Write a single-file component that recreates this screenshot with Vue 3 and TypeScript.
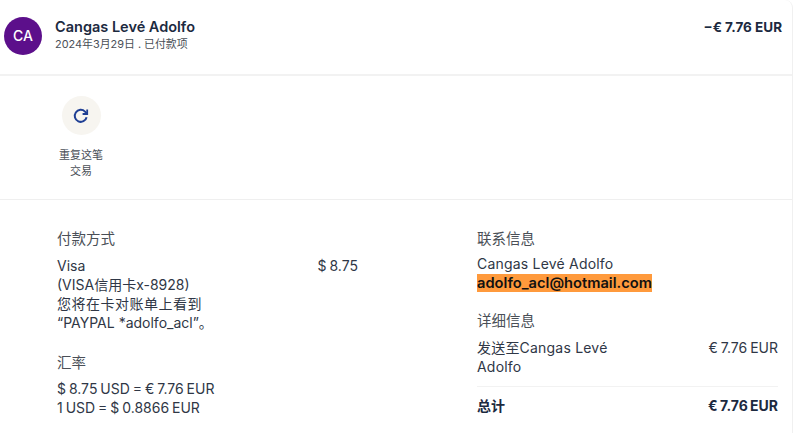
<script setup lang="ts">
const paymentLines = ['Visa', '(VISA信用卡x-8928)', '您将在卡对账单上看到', '“PAYPAL *adolfo_acl”。']
const rates = ['$ 8.75 USD = € 7.76 EUR', '1 USD = $ 0.8866 EUR']
</script>

<template>
  <div class="card">
    <header class="head">
      <div class="avatar">CA</div>
      <div class="who">
        <div class="name">Cangas Levé Adolfo</div>
        <div class="date">2024年3月29日 . 已付款项</div>
      </div>
      <div class="amount">−€ 7.76 EUR</div>
    </header>

    <section class="actions">
      <div class="action">
        <div class="action-icon">
          <svg width="18" height="18" viewBox="0 0 18 18" fill="none" stroke="#1f3f94" stroke-width="2">
            <path d="M14.6 10.2A6 6 0 1 1 13 4.6L15 6.6" />
            <path d="M15.2 2.4V7H10.6" stroke-width="1.8" />
          </svg>
        </div>
        <div class="action-label">重复这笔<br />交易</div>
      </div>
    </section>

    <section class="details">
      <div class="col-left">
        <h3 class="title">付款方式</h3>
        <div class="pay-row">
          <div class="pay-lines">
            <div v-for="line in paymentLines" :key="line">{{ line }}</div>
          </div>
          <div class="money">$ 8.75</div>
        </div>
        <h3 class="title rate-title">汇率</h3>
        <div v-for="rate in rates" :key="rate" class="money">{{ rate }}</div>
      </div>

      <div class="col-right">
        <h3 class="title contact-title">联系信息</h3>
        <div class="contact">Cangas Levé Adolfo</div>
        <div><mark class="email">adolfo_acl@hotmail.com</mark></div>
        <h3 class="title info-title">详细信息</h3>
        <div class="line-row">
          <div class="send-to">发送至Cangas Levé Adolfo</div>
          <div class="money">€ 7.76 EUR</div>
        </div>
        <div class="total-row">
          <div>总计</div>
          <div class="money">€ 7.76 EUR</div>
        </div>
      </div>
    </section>
  </div>
</template>

<style>
html,
body {
  margin: 0;
  background: #fff;
}
</style>

<style scoped>
.card {
  width: 793px;
  height: 433px;
  box-sizing: border-box;
  border-right: 1px solid #f0f0f0;
  border-top-right-radius: 8px;
  overflow: hidden;
  font-family: Inter, "Noto Sans CJK SC", sans-serif;
  font-size: 14px;
  line-height: 19px;
  color: #2f3746;
}

.head {
  display: flex;
  height: 76px;
  box-sizing: border-box;
  padding: 17px 10px 0 4px;
  border-bottom: 2px solid #f2f2f2;
}

.avatar {
  width: 38px;
  height: 38px;
  border-radius: 50%;
  background: #5c0f8b;
  color: #fff;
  font-size: 14px;
  font-weight: 500;
  line-height: 38px;
  text-align: center;
}

.who {
  flex: 1;
  margin-left: 13px;
}

.name {
  font-size: 14.5px;
  font-weight: 600;
  line-height: 20px;
  color: #1c2a3f;
}

.date {
  font-size: 10.9px;
  line-height: 15px;
  color: #4a4f57;
}

.amount {
  font-size: 13.5px;
  font-weight: 700;
  line-height: 20px;
  color: #1c2a3f;
}

.actions {
  height: 124px;
  box-sizing: border-box;
  padding: 20px 0 0 53px;
  border-bottom: 1px solid #efefef;
}

.action {
  width: 56px;
  display: flex;
  flex-direction: column;
  align-items: center;
}

.action-icon {
  width: 39px;
  height: 39px;
  border-radius: 50%;
  background: #f7f5f0;
  display: flex;
  align-items: center;
  justify-content: center;
}

.action-label {
  margin-top: 12px;
  font-size: 11px;
  line-height: 16px;
  text-align: center;
  color: #4a4f57;
}

.details {
  display: grid;
  grid-template-columns: 301px 301px;
  column-gap: 119px;
  padding: 29px 0 0 57px;
}

.title {
  margin: 0 0 7px;
  font-size: 14.5px;
  font-weight: 400;
  line-height: 20px;
  color: #4a4f57;
}

.pay-row {
  display: flex;
  justify-content: space-between;
}

.pay-lines div:nth-child(3) {
  letter-spacing: 0.5px;
}

.money {
  word-spacing: -1px;
}

.rate-title {
  margin-top: 21px;
  margin-bottom: 6px;
}

.contact-title {
  margin-bottom: 5px;
}

.contact,
.send-to {
  letter-spacing: 0.2px;
}

.email {
  background: #ff9a3c;
  color: #111;
  font-size: 14.7px;
  font-weight: 600;
}

.info-title {
  margin-top: 18px;
}

.line-row,
.total-row {
  display: flex;
  justify-content: space-between;
}

.send-to {
  width: 150px;
}

.total-row {
  margin-top: 10px;
  padding-top: 9px;
  border-top: 1px solid #f2f2f2;
  font-weight: 700;
  color: #1c2a3f;
}
</style>
